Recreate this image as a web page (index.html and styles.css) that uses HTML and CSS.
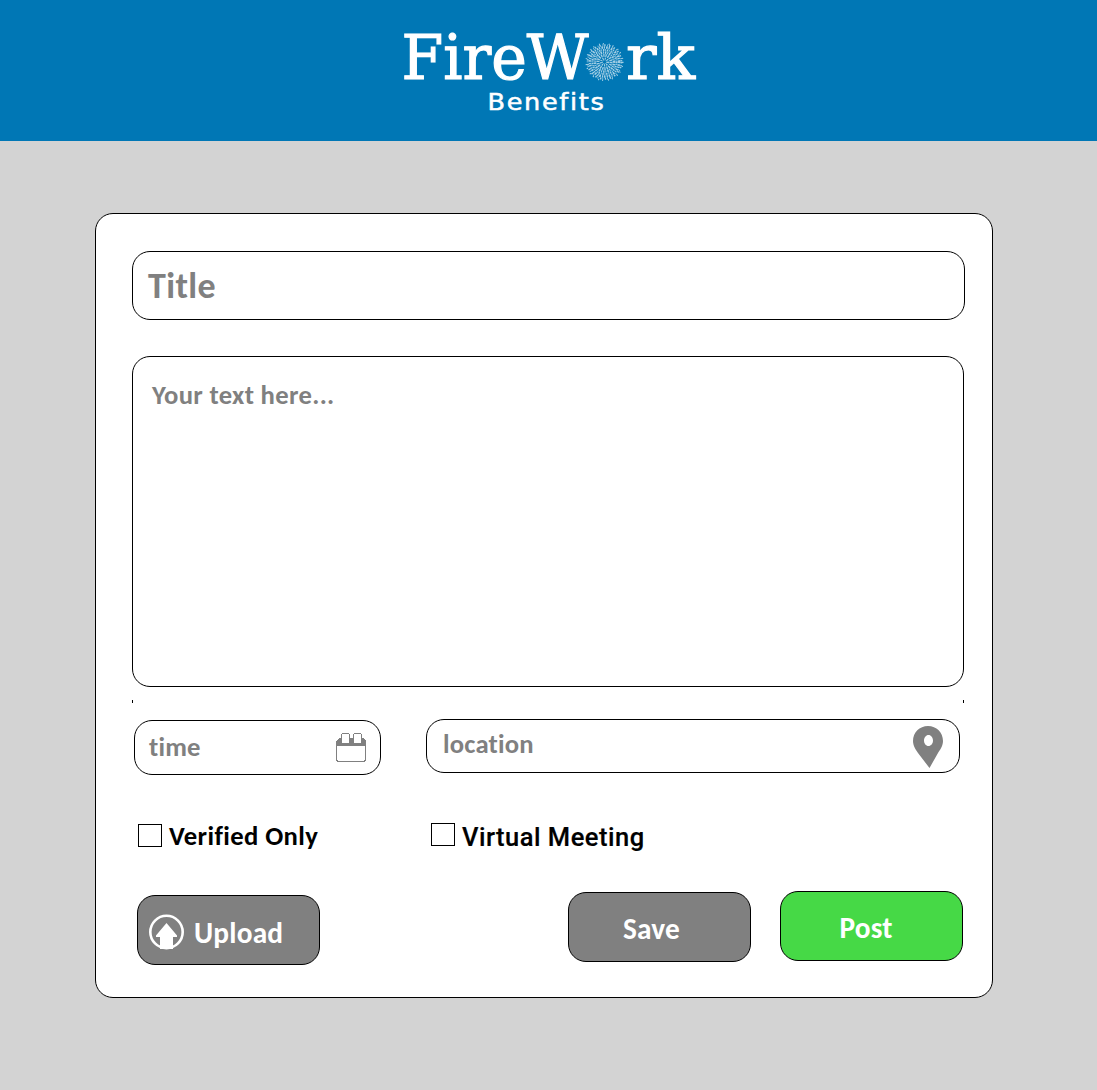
FILE: index.html
```html
<!DOCTYPE html>
<html lang="en">
<head>
<meta charset="utf-8">
<title>FireWork Benefits</title>
<link rel="stylesheet" href="styles.css">
</head>
<body>
<header class="header">
  <svg class="logo" width="300" height="100" viewBox="400 20 300 100" role="img" aria-label="FireWork Benefits">
    <g class="logo-name">
      <text x="401.500" y="79" textLength="187" lengthAdjust="spacingAndGlyphs">FireW</text>
      <text x="626" y="79" textLength="69" lengthAdjust="spacingAndGlyphs">rk</text>
    </g>
    <g class="burst">
      <circle cx="604.500" cy="62" r="3" stroke-width="3" stroke-dasharray="1 1"/>
      <circle cx="604.500" cy="62" r="6.500" stroke-width="3" stroke-dasharray="1.300 .9"/>
      <circle cx="604.500" cy="62" r="9.500" stroke-width="2.500" stroke-dasharray="1 .8 1.600 .9"/>
      <circle cx="604.500" cy="62" r="12" stroke-width="2" stroke-dasharray="1.500 .7 .8 .9"/>
      <circle cx="604.500" cy="62" r="14.500" stroke-width="2.500" stroke-dasharray="1.200 1.100 1.700 .8"/>
      <circle cx="604.500" cy="62" r="16.800" stroke-width="2" stroke-dasharray="1.400 1.700 .8 1"/>
      <circle cx="604.500" cy="62" r="18.300" stroke-width="1.500" stroke-dasharray="1 3 1 5"/>
    </g>
    <text class="logo-sub" x="487.500" y="110" textLength="118" lengthAdjust="spacingAndGlyphs">Benefits</text>
  </svg>
</header>
<main class="card">
  <div class="box title"><span>Title</span></div>
  <div class="box message"><span>Your text here...</span></div>
  <div class="ticks"><i></i><i></i></div>
  <div class="row details">
    <div class="box time"><span>time</span>
      <svg width="32" height="32" viewBox="0 0 32 32" shape-rendering="crispEdges">
        <path d="M1 14V9L4 6H28L31 9V14Z" fill="#808080"/>
        <rect x="1.500" y="9.500" width="29" height="20" rx="3" fill="none" stroke="#808080"/>
        <rect x="2" y="14" width="28" height="14" fill="#fff"/>
        <path d="M6.500 11V2.500L7.500 1.500H13.500L14.500 2.500V11ZM18.500 11V2.500L19.500 1.500H25.500L26.500 2.500V11Z" fill="#fff" stroke="#808080"/>
      </svg>
    </div>
    <div class="box location"><span>location</span>
      <svg width="30" height="42" viewBox="0 0 30 42">
        <path fill="#808080" fill-rule="evenodd" d="M15 0C6.500 0 0 6.500 0 15C0 20 3 24 5 27L16.500 42L25 27C27 24 30 20 30 15C30 6.500 23.500 0 15 0ZM15.500 9C18 9 20 11.500 20 14.500S18 20 15.500 20S11 17.500 11 14.500S13 9 15.500 9Z"/>
      </svg>
    </div>
  </div>
  <div class="row checks">
    <label class="check verified"><i class="tick-box"></i><span>Verified Only</span></label>
    <label class="check virtual"><i class="tick-box"></i><span>Virtual Meeting</span></label>
  </div>
  <div class="row actions">
    <button class="box btn upload">
      <svg width="36" height="36" viewBox="0 0 36 36">
        <circle cx="17.500" cy="18" r="16.200" fill="none" stroke="#fff" stroke-width="2.600"/>
        <path d="M17.500 9L28 21.500V23H24V35H11V23H7V21.500Z" fill="#fff"/>
      </svg>
      <span>Upload</span>
    </button>
    <button class="box btn save"><span>Save</span></button>
    <button class="box btn post"><span>Post</span></button>
  </div>
</main>
</body>
</html>
```
FILE: styles.css
```css
* { box-sizing: border-box; }
body {
  margin: 0;
  height: 1090px;
  background: #d3d3d3;
  font-family: Carlito, Lato, sans-serif;
  font-weight: 700;
  font-variant-ligatures: none;
  color: #000;
}
.header {
  height: 141px;
  padding: 20px 0 0 400px;
  background: #0077b5;
}
.logo { display: block; fill: #fff; }
.logo-name { font: 400 62px "DejaVu Serif", serif; stroke: #fff; stroke-width: 1.200px; }
.logo-sub { font: 400 23px "DejaVu Sans", sans-serif; font-variant-ligatures: none; stroke: #fff; stroke-width: .5px; letter-spacing: 1.500px; }
.burst { fill: none; stroke: #b4d8ea; opacity: .9; }
.card {
  width: 898px;
  height: 785px;
  margin: 72px 0 0 95px;
  padding: 37px 27px 0 36px;
  background: #fff;
  border: 1px solid #000;
  border-radius: 18px;
}
.box { border: 1px solid #000; border-radius: 18px; background: #fff; color: #808080; }
.box span, .check span { display: block; line-height: 30px; white-space: nowrap; }
.title { width: 833px; height: 69px; padding: 19px 15px; font-size: 36px; letter-spacing: .4px; }
.message { width: 832px; height: 331px; margin-top: 36px; padding: 23px 19px; font-size: 26.67px; letter-spacing: .33px; }
.ticks { display: flex; justify-content: space-between; width: 832px; height: 3px; margin-top: 13px; }
.ticks i { width: 1px; background: #000; }
.row { display: flex; align-items: flex-start; }
.details { margin: 16px 0 0 2px; }
.time, .location { display: flex; justify-content: space-between; font-size: 26.67px; letter-spacing: .2px; }
.time { width: 247px; height: 55px; margin-top: 1px; padding: 11px 13px 0 14px; }
.time svg { margin-top: 0; }
.location { width: 534px; height: 54px; margin-left: 45px; padding: 9px 16px 0 16px; }
.location svg { margin-top: -3px; }
.checks { margin: 48px 0 0 6px; height: 42px; font-size: 26.67px; letter-spacing: .4px; }
.check { display: flex; }
.tick-box { width: 24px; height: 23px; border: 1px solid #000; }
.verified { width: 293px; padding-top: 1px; gap: 7px; }
.verified span { margin-top: -3px; }
.virtual { gap: 7px; font: 500 25.500px "Roboto", sans-serif; letter-spacing: .5px; }
.virtual span { margin-top: -1px; -webkit-text-stroke: .2px #000; }
.actions { margin: 26px 0 0 5px; }
.btn {
  display: flex;
  justify-content: center;
  width: 183px;
  height: 70px;
  padding: 21px 0 0;
  background: #808080;
  color: #fff;
  font: inherit;
  font-size: 29.33px;
  letter-spacing: .2px;
}
.upload { justify-content: flex-start; gap: 9px; margin-top: 4px; padding: 22px 0 0 11px; }
.upload svg { margin-top: -4px; }
.save { margin: 1px 29px 0 248px; padding-right: 16px; }
.post { padding-right: 11px; background: #46d946; }
```
